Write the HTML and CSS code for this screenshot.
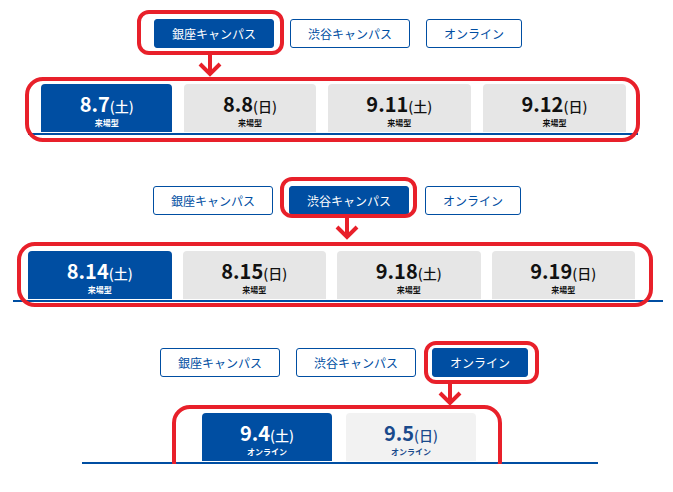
FILE: index.html
```html
<!DOCTYPE html>
<html lang="ja">
<head>
  <meta charset="UTF-8" />
  <title>オープンキャンパス日程</title>
  <link rel="stylesheet" href="styles.css">
</head>
<body>

  <!-- 銀座 -->
  <section class="shot shot-ginza">
    <nav class="campus-list">
      <a class="campus is-active">銀座キャンパス</a>
      <a class="campus">渋谷キャンパス</a>
      <a class="campus">オンライン</a>
    </nav>
    <div class="date-list">
      <div class="date is-active"><span class="date-day">8.7<small>(土)</small></span><span class="date-kind">来場型</span></div>
      <div class="date"><span class="date-day">8.8<small>(日)</small></span><span class="date-kind">来場型</span></div>
      <div class="date"><span class="date-day">9.11<small>(土)</small></span><span class="date-kind">来場型</span></div>
      <div class="date"><span class="date-day">9.12<small>(日)</small></span><span class="date-kind">来場型</span></div>
    </div>
    <div class="mark mark-btn"></div>
    <svg class="arrow" width="24" height="22" viewBox="0 0 24 22"><path d="M12 0V19M2 9l10 10 10-10" /></svg>
    <div class="mark mark-row"></div>
  </section>

  <!-- 渋谷 -->
  <section class="shot shot-shibuya">
    <nav class="campus-list">
      <a class="campus">銀座キャンパス</a>
      <a class="campus is-active">渋谷キャンパス</a>
      <a class="campus">オンライン</a>
    </nav>
    <div class="date-list">
      <div class="date is-active"><span class="date-day">8.14<small>(土)</small></span><span class="date-kind">来場型</span></div>
      <div class="date"><span class="date-day">8.15<small>(日)</small></span><span class="date-kind">来場型</span></div>
      <div class="date"><span class="date-day">9.18<small>(土)</small></span><span class="date-kind">来場型</span></div>
      <div class="date"><span class="date-day">9.19<small>(日)</small></span><span class="date-kind">来場型</span></div>
    </div>
    <div class="mark mark-btn"></div>
    <svg class="arrow" width="24" height="22" viewBox="0 0 24 22"><path d="M12 0V19M2 9l10 10 10-10" /></svg>
    <div class="mark mark-row"></div>
  </section>

  <!-- オンライン -->
  <section class="shot shot-online">
    <nav class="campus-list">
      <a class="campus">銀座キャンパス</a>
      <a class="campus">渋谷キャンパス</a>
      <a class="campus is-active">オンライン</a>
    </nav>
    <div class="date-list">
      <div class="date is-active"><span class="date-day">9.4<small>(土)</small></span><span class="date-kind">オンライン</span></div>
      <div class="date"><span class="date-day">9.5<small>(日)</small></span><span class="date-kind">オンライン</span></div>
    </div>
    <div class="mark mark-btn"></div>
    <svg class="arrow" width="24" height="22" viewBox="0 0 24 22"><path d="M12 0V19M2 9l10 10 10-10" /></svg>
    <div class="mark mark-row"></div>
  </section>

</body>
</html>
```

FILE: styles.css
```css
* { margin: 0; padding: 0; box-sizing: border-box; }
body { font-family: "Noto Sans CJK JP", "Noto Sans", sans-serif; background: #fff; color: #111; }

.shot { position: relative; }
.shot-ginza { padding-top: 19px; }
.shot-shibuya { padding-top: 51px; }
.shot-online { padding-top: 46px; }

/* キャンパス切替 */
.campus-list {
  display: flex;
  gap: 16px;
}
.shot-ginza .campus-list { padding-left: 154px; }
.shot-shibuya .campus-list { padding-left: 153px; }
.shot-online .campus-list { padding-left: 160px; }

.campus {
  display: flex;
  align-items: center;
  justify-content: center;
  height: 29px;
  padding: 0 17px;
  border: 1px solid #004ea2;
  border-radius: 3px;
  background: #fff;
  color: #004ea2;
  font-size: 12px;
  text-decoration: none;
}
.campus.is-active { background: #004ea2; color: #fff; }

/* 日程タブ */
.date-list {
  display: flex;
  gap: 12px;
  margin-top: 36px;
  padding-bottom: 1px;
  border-bottom: 2px solid #004ea2;
}
.shot-ginza .date-list { margin-left: 28px; width: 610px; padding-left: 13px; padding-right: 12px; }
.shot-shibuya .date-list { margin-left: 13px; width: 650px; padding-left: 15px; padding-right: 28px; gap: 11px; }
.shot-online .date-list { margin-left: 82px; width: 516px; padding-left: 120px; gap: 14px; }

.date {
  flex: 1 1 auto;
  height: 48px;
  display: flex;
  flex-direction: column;
  align-items: center;
  justify-content: flex-end;
  padding-bottom: 4px;
  background: #e6e6e6;
  border-radius: 4px 4px 0 0;
  font-weight: bold;
}
.shot-online .date { flex: 0 0 130px; background: #f2f2f2; color: #1a4a8c; }
.date.is-active { background: #004ea2; color: #fff; }

.date-day { font-size: 20px; line-height: 22px; }
.date-day small { font-size: 14px; font-weight: 500; }
.date-kind { font-size: 8px; line-height: 11px; }

/* 注釈（赤枠・矢印） */
.mark {
  position: absolute;
  border: 4px solid #e8202a;
}
.mark-btn { border-radius: 12px; }
.mark-row { border-radius: 18px; }

.arrow { position: absolute; }
.arrow path { fill: none; stroke: #e8202a; stroke-width: 4; }

.shot-ginza .mark-btn { left: 137px; top: 10px; width: 147px; height: 45px; }
.shot-ginza .arrow { left: 198px; top: 55px; }
.shot-ginza .mark-row { left: 25px; top: 77px; width: 615px; height: 65px; }

.shot-shibuya .mark-btn { left: 280px; top: 42px; width: 137px; height: 41px; }
.shot-shibuya .arrow { left: 335px; top: 83px; }
.shot-shibuya .mark-row { left: 17px; top: 107px; width: 636px; height: 65px; }

.shot-online .mark-btn { left: 424px; top: 39px; width: 115px; height: 43px; }
.shot-online .arrow { left: 438px; top: 82px; }
.shot-online .mark-row { left: 172px; top: 103px; width: 330px; height: 74px; }
```
